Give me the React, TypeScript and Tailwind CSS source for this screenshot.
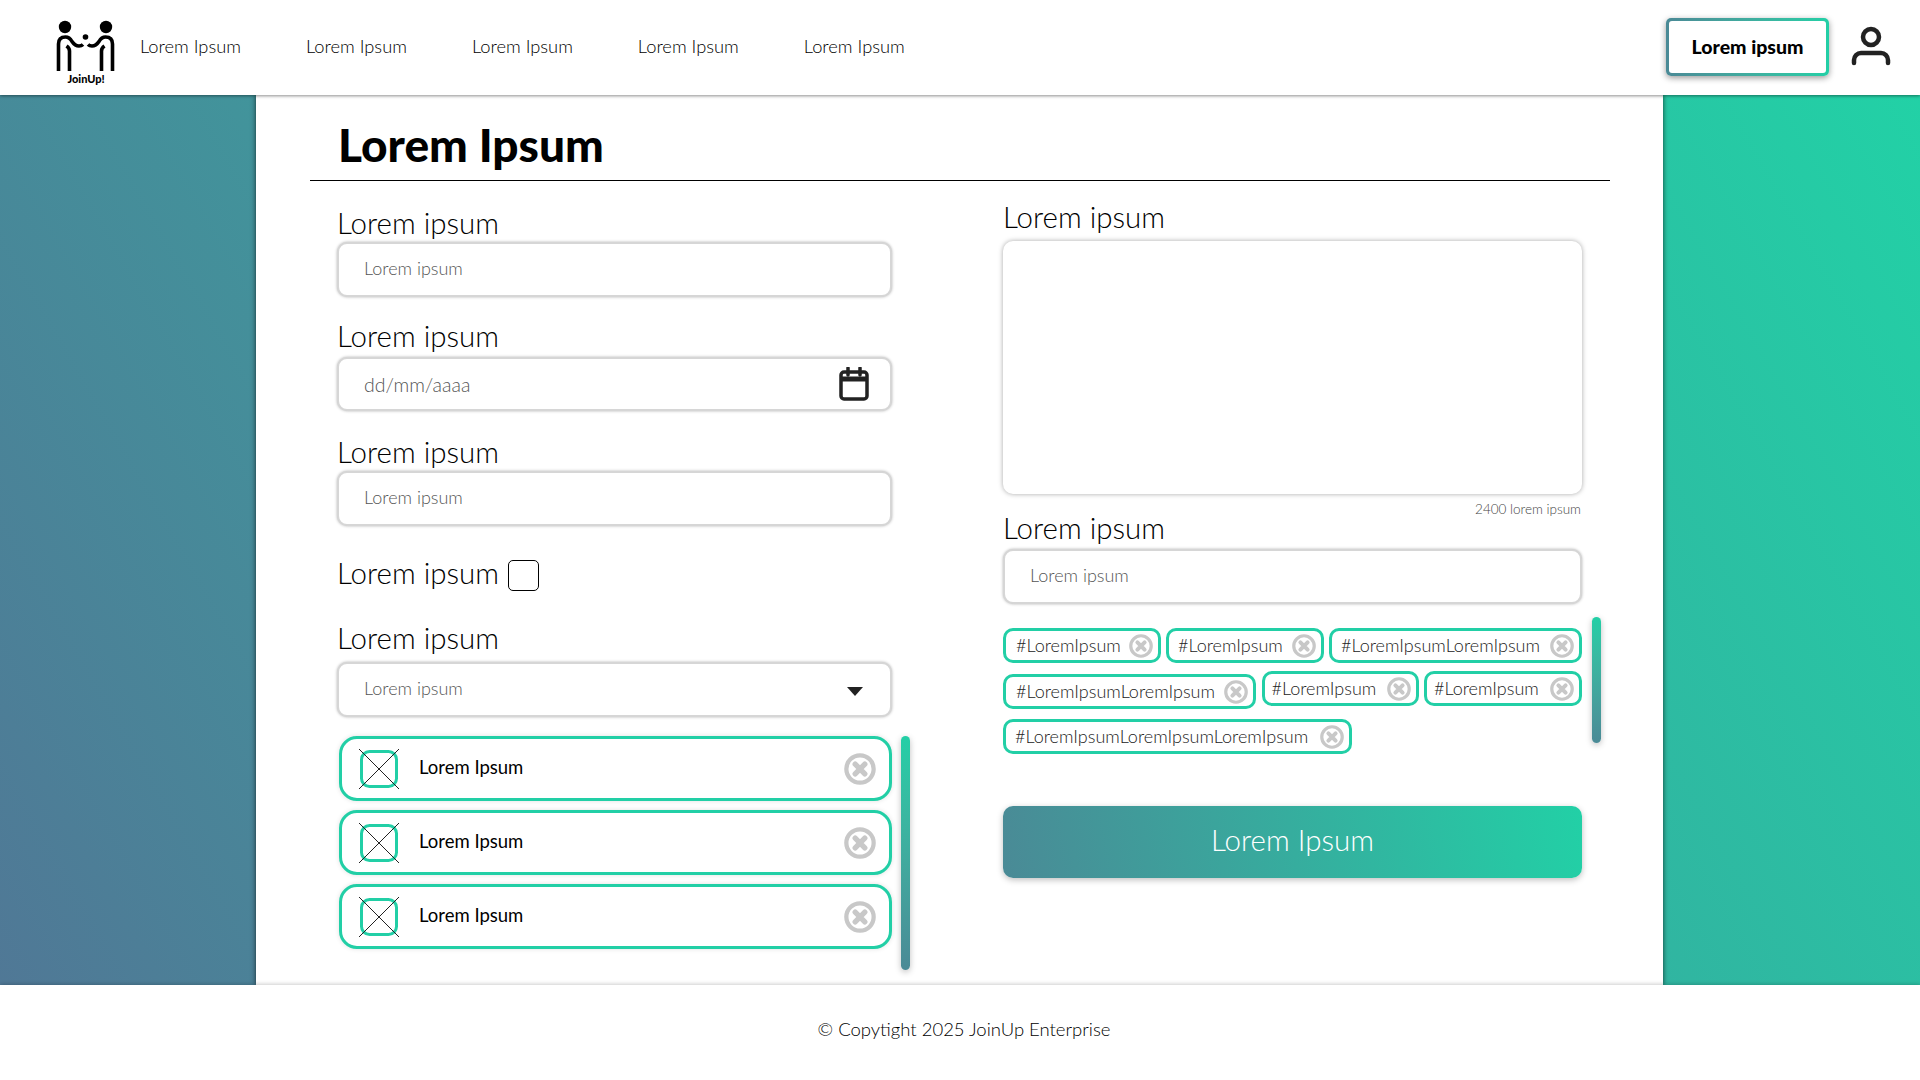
import React from "react";

const font = { fontFamily: '"Lato", "Liberation Sans", sans-serif' };

function Logo() {
  return (
    <div className="w-[72px] shrink-0 flex flex-col items-center mt-[8px]">
      <svg width="72" height="56" viewBox="50 18 72 56" fill="none" stroke="#000" strokeWidth="3.6">
        <circle cx="65" cy="27" r="6.2" fill="#000" stroke="none" />
        <circle cx="106" cy="27" r="6.2" fill="#000" stroke="none" />
        <circle cx="85.5" cy="37" r="2.8" fill="#000" stroke="none" />
        <path d="M58.5 71V44q0-7 7-7 4 0 6.500 4.500 3 4.500 7 4.500 2.500 0 4-1.500" />
        <path d="M69.500 71V51q0-3-3-5" />
        <path d="M112.500 71V44q0-7-7-7-4 0-6.500 4.500-3 4.500-7 4.500-2.500 0-4-1.500" />
        <path d="M101.500 71V51q0-3 3-5" />
      </svg>
      <span className="text-[11px] leading-[12px] font-black text-black -mt-[1px]">JoinUp!</span>
    </div>
  );
}

function RemoveIcon({ size }: { size: number }) {
  return (
    <svg width={size} height={size} viewBox="0 0 30 30" fill="none" className="shrink-0">
      <circle cx="15" cy="15" r="12.800" stroke="#c8c8c8" strokeWidth="4" />
      <path d="M10.500 10.500l9 9M19.500 10.500l-9 9" stroke="#c8c8c8" strokeWidth="5" strokeLinecap="round" />
    </svg>
  );
}

function TextInput({ placeholder }: { placeholder: string }) {
  return (
    <input
      placeholder={placeholder}
      className="w-full h-[55px] px-[25px] pb-[3px] bg-white rounded-[10px] border-2 border-[#d6d6d6] shadow-[0_0_3px_rgba(0,0,0,0.3)] text-[18px] font-light placeholder:text-[#555] outline-none"
    />
  );
}

function ListItem() {
  return (
    <div className="h-[65px] flex items-center pl-[16px] pr-[13px] bg-white rounded-[18px] border-[3px] border-[#22cfa6] shadow-[0_0_5px_rgba(0,0,0,0.12)]">
      <svg width="42" height="42" viewBox="0 0 42 42" fill="none" className="shrink-0">
        <rect x="3.500" y="3.500" width="35" height="35" rx="8" stroke="#22cfa6" strokeWidth="3" />
        <path d="M1 1l40 40M41 1L1 41" stroke="#222" strokeWidth="1" />
      </svg>
      <span className="ml-[19px] flex-1 text-[18.500px] font-normal text-black -mt-[2px]">Lorem Ipsum</span>
      <RemoveIcon size={32} />
    </div>
  );
}

function Tag({ w, text, pl = "pl-[10px]", extra = "" }: { w: string; text: string; pl?: string; extra?: string }) {
  return (
    <div className={`${w} ${pl} ${extra} h-[35px] flex items-center justify-between pr-[5px] bg-white rounded-[10px] border-[3px] border-[#22cfa6] whitespace-nowrap`}>
      <span className="text-[18px] font-light text-[#222]">{text}</span>
      <RemoveIcon size={24} />
    </div>
  );
}

function ScrollThumb({ h }: { h: string }) {
  return <div className={`${h} w-[9px] shrink-0 rounded-full bg-gradient-to-b from-[#22cfa6] to-[#4a8a96] shadow-[0_2px_6px_rgba(0,0,0,0.25)]`} />;
}

export default function App() {
  return (
    <div className="h-screen flex flex-col bg-white text-black overflow-hidden" style={font}>
      {/* Header */}
      <header className="relative z-10 h-[95px] shrink-0 bg-white flex items-center pl-[50px] pr-[29px] shadow-[0_1px_3px_rgba(0,0,0,0.45)]">
        <Logo />
        <nav className="ml-[18px] flex gap-[65px] text-[18.300px] font-light -mt-[2px]">
          <a>Lorem Ipsum</a>
          <a>Lorem Ipsum</a>
          <a>Lorem Ipsum</a>
          <a>Lorem Ipsum</a>
          <a>Lorem Ipsum</a>
        </nav>
        <div className="ml-auto -mt-[2px] p-[3px] rounded-[5px] bg-gradient-to-r from-[#4a8a96] to-[#22cfa6] shadow-[0_2px_6px_rgba(0,0,0,0.4)]">
          <div className="w-[157px] h-[52px] bg-white rounded-[3px] flex items-center justify-center text-[19.500px] font-black">
            Lorem ipsum
          </div>
        </div>
        <svg width="40" height="42" viewBox="0 0 40 42" fill="none" stroke="#222" strokeWidth="4.500" strokeLinecap="round" className="ml-[22px] -mt-[2px]">
          <circle cx="20" cy="11" r="8" />
          <path d="M3 37v-3a7 7 0 0 1 7-7h20a7 7 0 0 1 7 7v3" />
        </svg>
      </header>

      {/* Body */}
      <main className="h-[890px] shrink-0 bg-[linear-gradient(60deg,#507896,#22d1a6)]">
        <div className="w-[1407px] h-full ml-[256px] bg-white shadow-[0_0_5px_rgba(0,0,0,0.7)]">
          <div className="ml-[54px] mr-[53px] h-[86px] border-b border-black flex items-center pl-[28px] pt-[15px]">
            <h1 className="text-[46px] font-black leading-none">Lorem Ipsum</h1>
          </div>

          <div className="flex">
            {/* Left column */}
            <div className="ml-[81px] w-[555px] shrink-0 text-[29.500px] font-light">
              <p className="mt-[27px] mb-[4px] leading-[30px]">Lorem ipsum</p>
              <TextInput placeholder="Lorem ipsum" />
              <p className="mt-[24px] mb-[6px] leading-[30px]">Lorem ipsum</p>
              <div className="h-[54px] flex items-center justify-between pl-[25px] pr-[21px] bg-white rounded-[10px] border-2 border-[#d6d6d6] shadow-[0_0_3px_rgba(0,0,0,0.3)]">
                <span className="mt-[2px] text-[19.500px] font-light text-[#555]">dd/mm/aaaa</span>
                <svg width="30" height="34" viewBox="0 0 30 34" fill="none">
                  <rect x="2" y="5" width="26" height="27" rx="3" stroke="#222" strokeWidth="3.500" />
                  <path d="M2 12h26" stroke="#222" strokeWidth="5" />
                  <path d="M9 1v7M21 1v7" stroke="#222" strokeWidth="3.500" strokeLinecap="round" />
                </svg>
              </div>
              <p className="mt-[26px] mb-[4px] leading-[30px]">Lorem ipsum</p>
              <TextInput placeholder="Lorem ipsum" />
              <div className="mt-[34px] flex items-center gap-[9px]">
                <span className="leading-[24px] mb-[6px]">Lorem ipsum</span>
                <span className="w-[31px] h-[31px] rounded-[5px] border border-black" />
              </div>
              <p className="mt-[32px] mb-[9px] leading-[30px]">Lorem ipsum</p>
              <div className="relative">
                <TextInput placeholder="Lorem ipsum" />
                <svg width="16" height="9" viewBox="0 0 16 9" className="absolute right-[29px] top-[25px]">
                  <path d="M0 0h16L8 9z" fill="#222" />
                </svg>
              </div>
              <div className="ml-[2px] mt-[19px] w-[571px] flex gap-[9px]">
                <div className="w-[553px] flex flex-col gap-[9px]">
                  <ListItem />
                  <ListItem />
                  <ListItem />
                </div>
                <ScrollThumb h="h-[234px]" />
              </div>
            </div>

            {/* Right column */}
            <div className="ml-[111px] w-[598px] shrink-0">
              <div className="w-[579px] text-[29.500px] font-light">
                <p className="mt-[21px] mb-[9px] leading-[30px]">Lorem ipsum</p>
                <textarea className="block w-full h-[253px] bg-white rounded-[10px] shadow-[0_0_5px_rgba(0,0,0,0.35)] outline-none resize-none" />
                <p className="mt-[7px] text-right text-[13.500px] leading-[16px] text-[#444] pr-[1px]">2400 lorem ipsum</p>
                <p className="-mt-[4px] mb-[6px] leading-[30px]">Lorem ipsum</p>
                <TextInput placeholder="Lorem ipsum" />
              </div>

              <div className="mt-[13px] flex gap-[10px]">
                <div className="w-[579px] shrink-0 pt-[11px]">
                  <div className="flex justify-between">
                    <Tag w="w-[158px]" text="#LoremIpsum" />
                    <Tag w="w-[158px]" pl="pl-[9px]" text="#LoremIpsum" />
                    <Tag w="w-[253px]" pl="pl-[9px]" text="#LoremIpsumLoremIpsum" />
                  </div>
                  <div className="mt-[8px] flex items-start justify-between">
                    <Tag w="w-[253px]" text="#LoremIpsumLoremIpsum" extra="mt-[3px]" />
                    <Tag w="w-[157px]" pl="pl-[7px]" text="#LoremIpsum" />
                    <Tag w="w-[158px]" pl="pl-[7px]" text="#LoremIpsum" />
                  </div>
                  <div className="mt-[10px] flex">
                    <Tag w="w-[349px]" pl="pl-[9px]" text="#LoremIpsumLoremIpsumLoremIpsum" />
                  </div>
                </div>
                <ScrollThumb h="h-[126px]" />
              </div>
              <button className="mt-[52px] w-[579px] h-[72px] pb-[3px] rounded-[10px] bg-[linear-gradient(80deg,#4a8a96,#22d0a6)] shadow-[0_2px_6px_rgba(0,0,0,0.25)] text-white text-[29.500px] font-light">
                Lorem Ipsum
              </button>
            </div>
          </div>
        </div>
      </main>

      {/* Footer */}
      <footer className="relative z-10 h-[95px] shrink-0 bg-white flex items-center justify-center pl-[8px] pb-[6px] text-[18.500px] font-light shadow-[0_-1px_4px_rgba(0,0,0,0.2)]">
        © Copytight 2025 JoinUp Enterprise
      </footer>
    </div>
  );
}
